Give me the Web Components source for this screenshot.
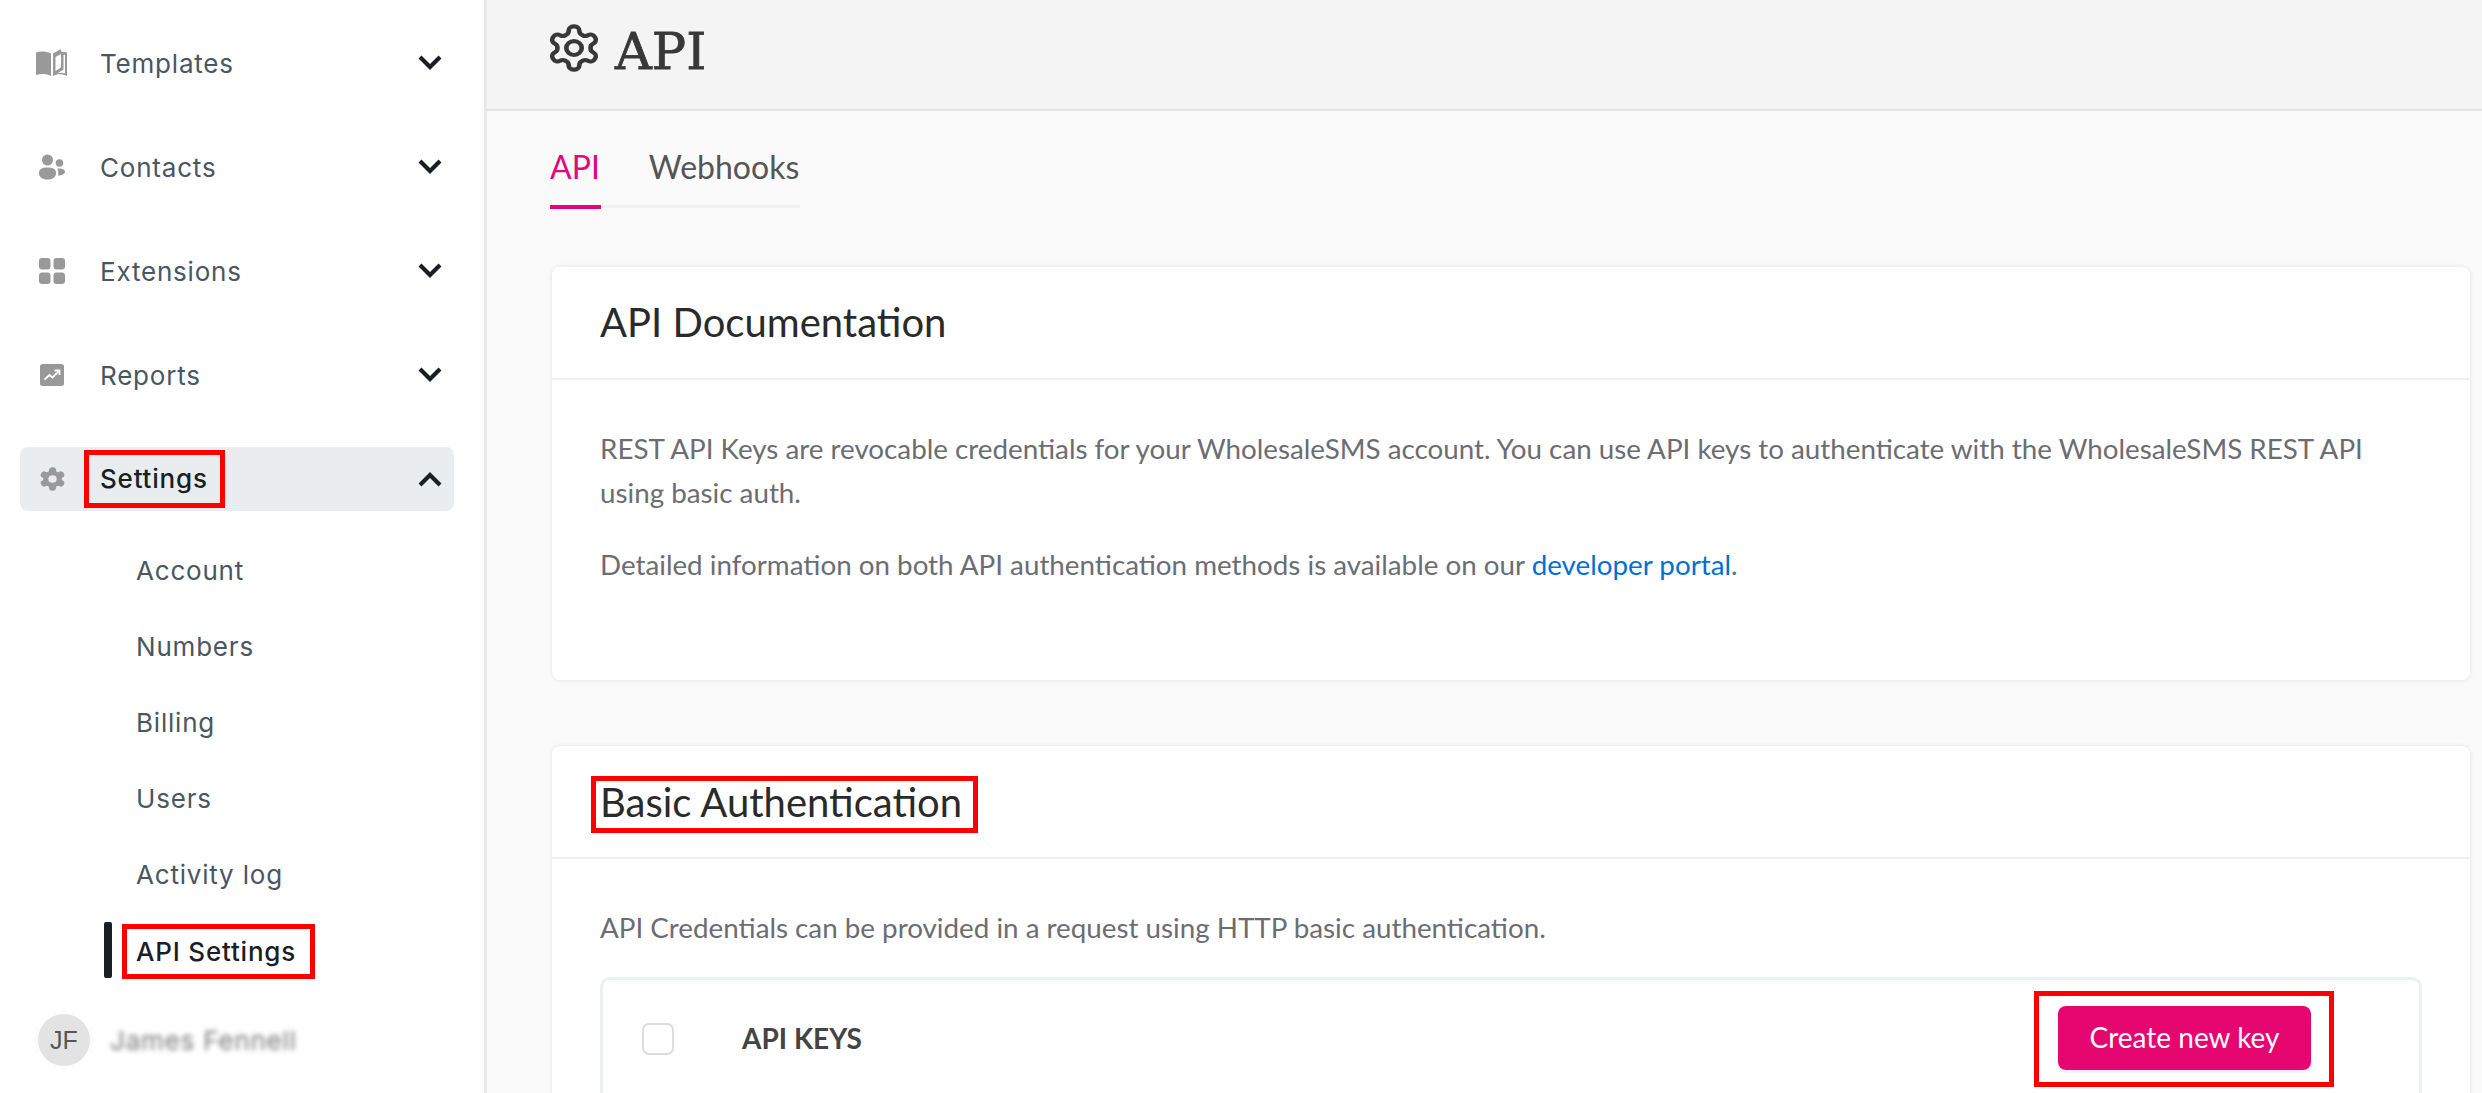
<!DOCTYPE html>
<html>
<head>
<meta charset="utf-8">
<style>
    html, body { margin: 0; height: 100%; overflow: hidden; background: #fafafa; }
    body { display: flex; height: 1093px; font-family: "Lato", sans-serif; }
    info-card a { color: #0070d2; text-decoration: none; }
</style>
</head>
<body>
<side-nav>
    <nav-item label="Templates" icon="book"></nav-item>
    <nav-item label="Contacts" icon="people"></nav-item>
    <nav-item label="Extensions" icon="grid"></nav-item>
    <nav-item label="Reports" icon="chart"></nav-item>
    <nav-item label="Settings" icon="gear" open>
        <sub-item>Account</sub-item>
        <sub-item>Numbers</sub-item>
        <sub-item>Billing</sub-item>
        <sub-item>Users</sub-item>
        <sub-item>Activity log</sub-item>
        <sub-item active>API Settings</sub-item>
    </nav-item>
    <user-chip initials="JF">James Fennell</user-chip>
</side-nav>
<main-pane>
    <page-header>API</page-header>
    <tab-bar>
        <tab-link active>API</tab-link>
        <tab-link>Webhooks</tab-link>
    </tab-bar>
    <info-card heading="API Documentation" style="height:413px">
        <p>REST API Keys are revocable credentials for your WholesaleSMS account. You can use API keys to authenticate with the WholesaleSMS REST API using basic auth.</p>
        <p>Detailed information on both API authentication methods is available on our <a href="#">developer portal</a>.</p>
    </info-card>
    <info-card heading="Basic Authentication" marked style="margin-top:66px">
        <p>API Credentials can be provided in a request using HTTP basic authentication.</p>
        <key-table></key-table>
    </info-card>
</main-pane>

<script>
const GEAR = "M12.220 2h-.44a2 2 0 0 0-2 2v.18a2 2 0 0 1-1 1.730l-.43.25a2 2 0 0 1-2 0l-.15-.08a2 2 0 0 0-2.730.73l-.22.38a2 2 0 0 0 .73 2.730l.15.1a2 2 0 0 1 1 1.720v.51a2 2 0 0 1-1 1.740l-.15.09a2 2 0 0 0-.73 2.730l.22.38a2 2 0 0 0 2.730.73l.15-.08a2 2 0 0 1 2 0l.43.25a2 2 0 0 1 1 1.730V20a2 2 0 0 0 2 2h.44a2 2 0 0 0 2-2v-.18a2 2 0 0 1 1-1.730l.43-.25a2 2 0 0 1 2 0l.15.08a2 2 0 0 0 2.730-.73l.22-.39a2 2 0 0 0-.73-2.730l-.15-.08a2 2 0 0 1-1-1.740v-.5a2 2 0 0 1 1-1.740l.15-.09a2 2 0 0 0 .73-2.730l-.22-.38a2 2 0 0 0-2.730-.73l-.15.08a2 2 0 0 1-2 0l-.43-.25a2 2 0 0 1-1-1.730V4a2 2 0 0 0-2-2z";

const ICONS = {
    book: `<svg width="34" height="30" viewBox="0 0 34 30" fill="#999"><path d="M1 4.500C5 3 11 3 16 5.500V28C11 25.500 6 25.500 1 27Z"/><path fill-rule="evenodd" d="M18 5.500 26 1V3.500L32 4.500V28C27 25.500 22 25.500 18 28ZM20.500 9V23L26 19.500V6ZM28.500 7V21.500L22.500 25.300C25 24.500 27.500 24.500 30 25.500V7Z"/></svg>`,
    people: `<svg width="28" height="26" viewBox="0 0 28 26" fill="#999"><circle cx="9.500" cy="6" r="5.500"/><circle cx="21.500" cy="9" r="3.800"/><path d="M1 19C1 15 4 13.500 9.500 13.500S18 15 18 19 15 25.500 9.500 25.500 1 23 1 19Z"/><path d="M19.500 14.500C23 14 27 15 27 17.500 27 20 23.500 21.500 20 21.500 20.500 19 20.500 17 19.500 14.500Z"/></svg>`,
    grid: `<svg width="26" height="26" viewBox="0 0 26 26" fill="#999"><rect x="0" y="0" width="11.500" height="11.500" rx="3"/><rect x="14.500" y="0" width="11.500" height="11.500" rx="3"/><rect x="0" y="14.500" width="11.500" height="11.500" rx="3"/><rect x="14.500" y="14.500" width="11.500" height="11.500" rx="3"/></svg>`,
    chart: `<svg width="24" height="22" viewBox="0 0 24 22"><rect width="24" height="22" rx="2.500" fill="#999"/><path d="M4.500 15.500 9.500 11 12.500 13.500 19 7M14.500 6.500H19.500V11" fill="none" stroke="#fff" stroke-width="1.800"/></svg>`,
    gear: `<svg width="29" height="26" viewBox="0 0 24 24" preserveAspectRatio="none"><path d="${GEAR}" fill="#999" stroke="#999" stroke-width="1.500"/><circle cx="12" cy="12" r="3.500" fill="#e9edf0"/></svg>`
};

class SideNav extends HTMLElement {
    constructor() {
        super();
        this.attachShadow({ mode: "open" });
        this.shadowRoot.innerHTML = `
            <style>
                :host {
                    display: flex;
                    flex-direction: column;
                    gap: 40px;
                    box-sizing: border-box;
                    flex: 0 0 487px;
                    height: 1093px;
                    padding: 31px 30px 0 20px;
                    background: #fff;
                    border-right: 3px solid #e9e9e9;
                    font-family: "Inter", sans-serif;
                    letter-spacing: .8px;
                }
            </style>
            <slot></slot>
        `;
    }
}

class NavItem extends HTMLElement {
    constructor() {
        super();
        this.attachShadow({ mode: "open" });
        const open = this.hasAttribute("open");
        const label = this.getAttribute("label");
        const chevron = open ? "M2 14 12 4 22 14" : "M2 2 12 12 22 2";
        this.shadowRoot.innerHTML = `
            <style>
                :host { display: block; }
                .row {
                    display: flex;
                    align-items: center;
                    height: 64px;
                    padding-right: 12px;
                    border-radius: 8px;
                    color: #4a5661;
                    font-size: 26px;
                }
                .open { background: #e9edf0; color: #191f25; font-weight: 500; }
                .icon { display: flex; justify-content: center; width: 64px; }
                .label { flex: 1; padding-left: 16px; }
                mark {
                    display: inline-block;
                    margin-left: -11px;
                    padding: 0 12px 0 11px;
                    background: none;
                    color: inherit;
                    line-height: 48px;
                    outline: 5px solid #f00;
                }
                .subs { display: flex; flex-direction: column; gap: 20px; padding: 31px 0 0 84px; }
            </style>
            <div class="row ${open ? "open" : ""}">
                <span class="icon">${ICONS[this.getAttribute("icon")]}</span>
                <span class="label">${open ? `<mark>${label}</mark>` : label}</span>
                <svg width="24" height="16" viewBox="0 0 24 16" fill="none" stroke="#191f25" stroke-width="4.200"><path d="${chevron}"/></svg>
            </div>
            ${open ? `<div class="subs"><slot></slot></div>` : ""}
        `;
    }
}

class SubItem extends HTMLElement {
    constructor() {
        super();
        this.attachShadow({ mode: "open" });
        const active = this.hasAttribute("active");
        this.shadowRoot.innerHTML = `
            <style>
                :host {
                    display: flex;
                    align-items: center;
                    height: 56px;
                    gap: 15px;
                    color: ${active ? "#191f25" : "#4a5661"};
                    font-size: 26px;
                    font-weight: ${active ? 500 : 400};
                }
                .bar { width: 8px; height: 56px; border-radius: 2px; background: #191f25; }
                .text { padding-left: 32px; }
                .on {
                    margin-top: 3px;
                    padding: 0 14px 0 9px;
                    line-height: 45px;
                    outline: 5px solid #f00;
                }
            </style>
            ${active ? `<span class="bar"></span><span class="on"><slot></slot></span>` : `<span class="text"><slot></slot></span>`}
        `;
    }
}

class UserChip extends HTMLElement {
    constructor() {
        super();
        this.attachShadow({ mode: "open" });
        this.shadowRoot.innerHTML = `
            <style>
                :host { display: flex; align-items: center; gap: 20px; margin: -4px 0 0 18px; height: 52px; }
                .avatar {
                    display: flex;
                    align-items: center;
                    justify-content: center;
                    width: 52px;
                    height: 52px;
                    border-radius: 50%;
                    background: #e3e3e3;
                    color: #555;
                    font: 25px "Liberation Sans", sans-serif;
                    letter-spacing: 0;
                }
                .name { color: #777; font-size: 26px; filter: blur(2.500px); white-space: nowrap; }
            </style>
            <span class="avatar">${this.getAttribute("initials")}</span>
            <span class="name"><slot></slot></span>
        `;
    }
}

class MainPane extends HTMLElement {
    constructor() {
        super();
        this.attachShadow({ mode: "open" });
        this.shadowRoot.innerHTML = `
            <style>
                :host { display: block; flex: 1; min-width: 0; height: 1093px; overflow: hidden; background: #fafafa; }
            </style>
            <slot></slot>
        `;
    }
}

class PageHeader extends HTMLElement {
    constructor() {
        super();
        this.attachShadow({ mode: "open" });
        this.shadowRoot.innerHTML = `
            <style>
                :host {
                    display: flex;
                    align-items: center;
                    gap: 12px;
                    box-sizing: border-box;
                    height: 111px;
                    padding: 0 0 13px 58px;
                    background: #f4f4f4;
                    border-bottom: 2px solid #e2e2e2;
                    color: #383838;
                    font: 51px "DejaVu Serif", serif;
                    -webkit-text-stroke: .8px #383838;
                }
                svg { -webkit-text-stroke: 0; }
                span { margin-top: 6px; }
            </style>
            <svg width="58" height="52" viewBox="0 0 24 24" preserveAspectRatio="none" fill="none" stroke="#383838" stroke-width="1.900" stroke-linejoin="round">
                <path d="${GEAR}"/>
                <circle cx="12" cy="12" r="3.200"/>
            </svg>
            <span><slot></slot></span>
        `;
    }
}

class TabBar extends HTMLElement {
    constructor() {
        super();
        this.attachShadow({ mode: "open" });
        this.shadowRoot.innerHTML = `
            <style>
                :host {
                    display: flex;
                    gap: 48px;
                    width: fit-content;
                    height: 97px;
                    box-sizing: border-box;
                    margin: 0 0 59px 63px;
                    border-bottom: 3px solid #f0f0f0;
                }
            </style>
            <slot></slot>
        `;
    }
}

class TabLink extends HTMLElement {
    constructor() {
        super();
        this.attachShadow({ mode: "open" });
        const active = this.hasAttribute("active");
        this.shadowRoot.innerHTML = `
            <style>
                :host {
                    display: flex;
                    align-items: center;
                    box-sizing: border-box;
                    height: 98px;
                    padding: 16px 1px 0 0;
                    font-size: 32px;
                    color: ${active ? "#e6067a" : "#555"};
                    border-bottom: 4px solid ${active ? "#e6067a" : "transparent"};
                }
            </style>
            <slot></slot>
        `;
    }
}

class InfoCard extends HTMLElement {
    constructor() {
        super();
        this.attachShadow({ mode: "open" });
        const heading = this.getAttribute("heading");
        const marked = this.hasAttribute("marked");
        this.shadowRoot.innerHTML = `
            <style>
                :host {
                    display: block;
                    box-sizing: border-box;
                    margin-left: 65px;
                    margin-right: 12px;
                    background: #fff;
                    border-radius: 8px;
                    box-shadow: 0 0 5px rgba(0, 0, 0, .1);
                }
                h2 {
                    display: flex;
                    align-items: center;
                    box-sizing: border-box;
                    height: 113px;
                    margin: 0;
                    padding: 0 0 2px 48px;
                    border-bottom: 2px solid #f0f0f0;
                    color: #2a2a2a;
                    font-size: 40px;
                    font-weight: 400;
                }
                h2 .on {
                    margin: 7px 0 0 -4px;
                    padding: 0 11px 5px 4px;
                    line-height: 42px;
                    outline: 5px solid #f00;
                }
                .body { padding: 47px 48px 0; }
                ::slotted(p) { margin: 0 0 28px; color: #6b6d72; font-size: 27.780px; line-height: 44px; }
            </style>
            <h2><span class="${marked ? "on" : ""}">${heading}</span></h2>
            <div class="body"><slot></slot></div>
        `;
    }
}

class KeyTable extends HTMLElement {
    constructor() {
        super();
        this.attachShadow({ mode: "open" });
        this.shadowRoot.innerHTML = `
            <style>
                :host {
                    display: flex;
                    align-items: flex-start;
                    box-sizing: border-box;
                    height: 200px;
                    padding: 26px 108px 0 39px;
                    margin-top: -1px;
                    background: #fff;
                    border: 3px solid #edf0f3;
                    border-radius: 10px;
                }
                .check {
                    box-sizing: border-box;
                    width: 32px;
                    height: 32px;
                    margin-top: 17px;
                    border: 2px solid #dcdcdc;
                    border-radius: 7px;
                }
                .title {
                    flex: 1;
                    margin: 15px 0 0 68px;
                    color: #444;
                    font-size: 28px;
                    font-weight: 700;
                }
                .mark {
                    margin: -10px -18px -12px -19px;
                    padding: 10px 18px 12px 19px;
                    outline: 5px solid #f00;
                }
            </style>
            <span class="check"></span>
            <span class="title">API KEYS</span>
            <span class="mark"><pink-button>Create new key</pink-button></span>
        `;
    }
}

class PinkButton extends HTMLElement {
    constructor() {
        super();
        this.attachShadow({ mode: "open" });
        this.shadowRoot.innerHTML = `
            <style>
                :host {
                    display: flex;
                    align-items: center;
                    justify-content: center;
                    box-sizing: border-box;
                    width: 253px;
                    height: 64px;
                    padding-bottom: 2px;
                    border-radius: 8px;
                    background: #e6066f;
                    color: #fff;
                    font-size: 28px;
                    box-shadow: 0 3px 2px rgba(0, 0, 0, .06);
                }
            </style>
            <slot></slot>
        `;
    }
}

customElements.define("side-nav", SideNav);
customElements.define("nav-item", NavItem);
customElements.define("sub-item", SubItem);
customElements.define("user-chip", UserChip);
customElements.define("main-pane", MainPane);
customElements.define("page-header", PageHeader);
customElements.define("tab-bar", TabBar);
customElements.define("tab-link", TabLink);
customElements.define("info-card", InfoCard);
customElements.define("key-table", KeyTable);
customElements.define("pink-button", PinkButton);
</script>
</body>
</html>
